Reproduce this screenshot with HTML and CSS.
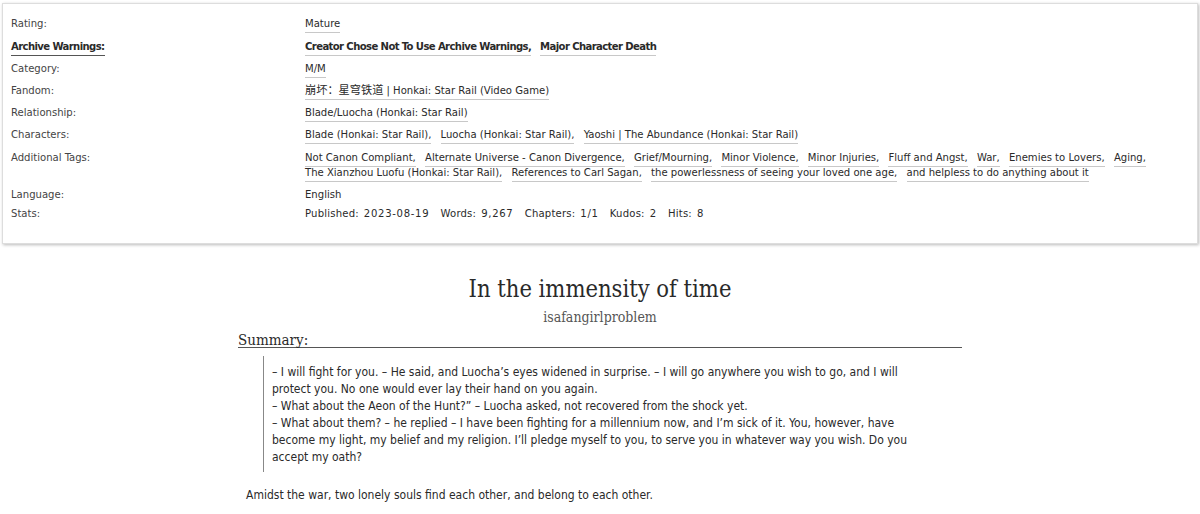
FILE: index.html
```html
<!DOCTYPE html>
<html lang="en">
<head>
    <meta charset="UTF-8">
    <meta name="viewport" content="width=device-width, initial-scale=1.0">
    <title>In the immensity of time</title>
    <link rel="stylesheet" href="styles.css">
</head>
<body>
    <dl class="work-meta">
        <dt class="tall">Rating:</dt>
        <dd class="tall">
            <ul class="tags">
                <li><a class="tag" href="#">Mature</a></li>
            </ul>
        </dd>

        <dt class="warning-label">Archive Warnings:</dt>
        <dd>
            <ul class="tags warnings">
                <li><a class="tag" href="#">Creator Chose Not To Use Archive Warnings,</a></li>
                <li><a class="tag" href="#">Major Character Death</a></li>
            </ul>
        </dd>

        <dt>Category:</dt>
        <dd>
            <ul class="tags">
                <li><a class="tag" href="#">M/M</a></li>
            </ul>
        </dd>

        <dt>Fandom:</dt>
        <dd>
            <ul class="tags">
                <li><a class="tag" href="#">崩坏：星穹铁道 | Honkai: Star Rail (Video Game)</a></li>
            </ul>
        </dd>

        <dt>Relationship:</dt>
        <dd>
            <ul class="tags">
                <li><a class="tag" href="#">Blade/Luocha (Honkai: Star Rail)</a></li>
            </ul>
        </dd>

        <dt class="tall">Characters:</dt>
        <dd class="tall">
            <ul class="tags">
                <li><a class="tag" href="#">Blade (Honkai: Star Rail),</a></li>
                <li><a class="tag" href="#">Luocha (Honkai: Star Rail),</a></li>
                <li><a class="tag" href="#">Yaoshi | The Abundance (Honkai: Star Rail)</a></li>
            </ul>
        </dd>

        <dt>Additional Tags:</dt>
        <dd>
            <ul class="tags">
                <li><a class="tag" href="#">Not Canon Compliant,</a></li>
                <li><a class="tag" href="#">Alternate Universe - Canon Divergence,</a></li>
                <li><a class="tag" href="#">Grief/Mourning,</a></li>
                <li><a class="tag" href="#">Minor Violence,</a></li>
                <li><a class="tag" href="#">Minor Injuries,</a></li>
                <li><a class="tag" href="#">Fluff and Angst,</a></li>
                <li><a class="tag" href="#">War,</a></li>
                <li><a class="tag" href="#">Enemies to Lovers,</a></li>
                <li><a class="tag" href="#">Aging,</a></li>
                <li><a class="tag" href="#">The Xianzhou Luofu (Honkai: Star Rail),</a></li>
                <li><a class="tag" href="#">References to Carl Sagan,</a></li>
                <li><a class="tag" href="#">the powerlessness of seeing your loved one age,</a></li>
                <li><a class="tag" href="#">and helpless to do anything about it</a></li>
            </ul>
        </dd>

        <dt class="plain">Language:</dt>
        <dd class="plain">English</dd>

        <dt>Stats:</dt>
        <dd>
            <dl class="stats">
                <dt>Published:</dt><dd>2023-08-19</dd>
                <dt>Words:</dt><dd>9,267</dd>
                <dt>Chapters:</dt><dd>1/1</dd>
                <dt>Kudos:</dt><dd>2</dd>
                <dt>Hits:</dt><dd>8</dd>
            </dl>
        </dd>
    </dl>

    <div class="preface">
        <h2 class="title">In the immensity of time</h2>
        <h3 class="byline">isafangirlproblem</h3>

        <div class="summary">
            <h3 class="heading">Summary:</h3>
            <blockquote class="userstuff">
                <p>– I will fight for you. – He said, and Luocha’s eyes widened in surprise. – I will go anywhere you wish to go, and I will protect you. No one would ever lay their hand on you again.<br>
                – What about the Aeon of the Hunt?” – Luocha asked, not recovered from the shock yet.<br>
                – What about them? – he replied – I have been fighting for a millennium now, and I’m sick of it. You, however, have become my light, my belief and my religion. I’ll pledge myself to you, to serve you in whatever way you wish. Do you accept my oath?</p>
            </blockquote>
            <p class="after">Amidst the war, two lonely souls find each other, and belong to each other.</p>
        </div>
    </div>
</body>
</html>
```

FILE: styles.css
```css
:root {
    --text: #2a2a2a;
    --label: #444;
    --tag-line: #c8c8c8;
}

body {
    margin: 0;
    font-family: "DejaVu Sans Condensed", "DejaVu Sans", "Noto Sans CJK SC", sans-serif;
    color: var(--text);
    background: #fff;
}

a {
    color: var(--text);
    text-decoration: none;
}

/* metadata box */
.work-meta {
    display: grid;
    grid-template-columns: 294px 1fr;
    margin: 3px 2px 0;
    padding: 12px 8px 15px;
    border: 1px solid #ddd;
    box-shadow: 1px 1px 3px #bbb;
    font-size: 11.2px;
    line-height: 15px;
}

.work-meta > dt,
.work-meta > dd {
    margin: 0;
    padding-bottom: 7px;
}

.work-meta > dt {
    color: var(--label);
}

.work-meta > .tall {
    padding-bottom: 8px;
}

.work-meta > .plain {
    padding-bottom: 4px;
}

.work-meta > dt.warning-label {
    color: var(--text);
    font-weight: bold;
    letter-spacing: -0.6px;
    justify-self: start;
    border-bottom: 1px solid #555;
    padding-bottom: 1px;
    margin-bottom: 5px;
}

.tags {
    list-style: none;
    margin: 0;
    padding: 0;
}

.tags li {
    display: inline;
    margin-right: 6px;
}

.tags .tag {
    white-space: nowrap;
    border-bottom: 1px solid var(--tag-line);
    padding-bottom: 2px;
}

.warnings {
    font-weight: bold;
    letter-spacing: -0.6px;
}

.stats {
    margin: 0;
}

.stats dt,
.stats dd {
    display: inline;
    margin: 0;
}

.stats dt {
    letter-spacing: 0.2px;
}

.stats dd {
    margin: 0 8px 0 5px;
    letter-spacing: 0.7px;
}

/* title and summary */
.preface {
    width: 724px;
    margin: 0 auto;
    font-family: "DejaVu Serif Condensed", "DejaVu Serif", serif;
}

.title {
    margin: 31px 0 0;
    text-align: center;
    font-size: 23.5px;
    font-weight: normal;
    line-height: 28px;
}

.byline {
    margin: 5px 0 0;
    text-align: center;
    font-size: 14px;
    font-weight: normal;
    line-height: 18px;
    color: #555;
}

.heading {
    margin: 7px 0 0;
    font-size: 15px;
    font-weight: normal;
    line-height: 14px;
    border-bottom: 1px solid #555;
}

.userstuff {
    margin: 8px 25px 0;
    padding: 8px 0 6px 8px;
    border-left: 1px solid #888;
    font-family: "DejaVu Sans Condensed", "DejaVu Sans", sans-serif;
    font-size: 12px;
    line-height: 17px;
}

.userstuff p {
    margin: 0;
}

.after {
    margin: 15px 8px 0;
    font-family: "DejaVu Sans Condensed", "DejaVu Sans", sans-serif;
    font-size: 12px;
    line-height: 17px;
}
```
